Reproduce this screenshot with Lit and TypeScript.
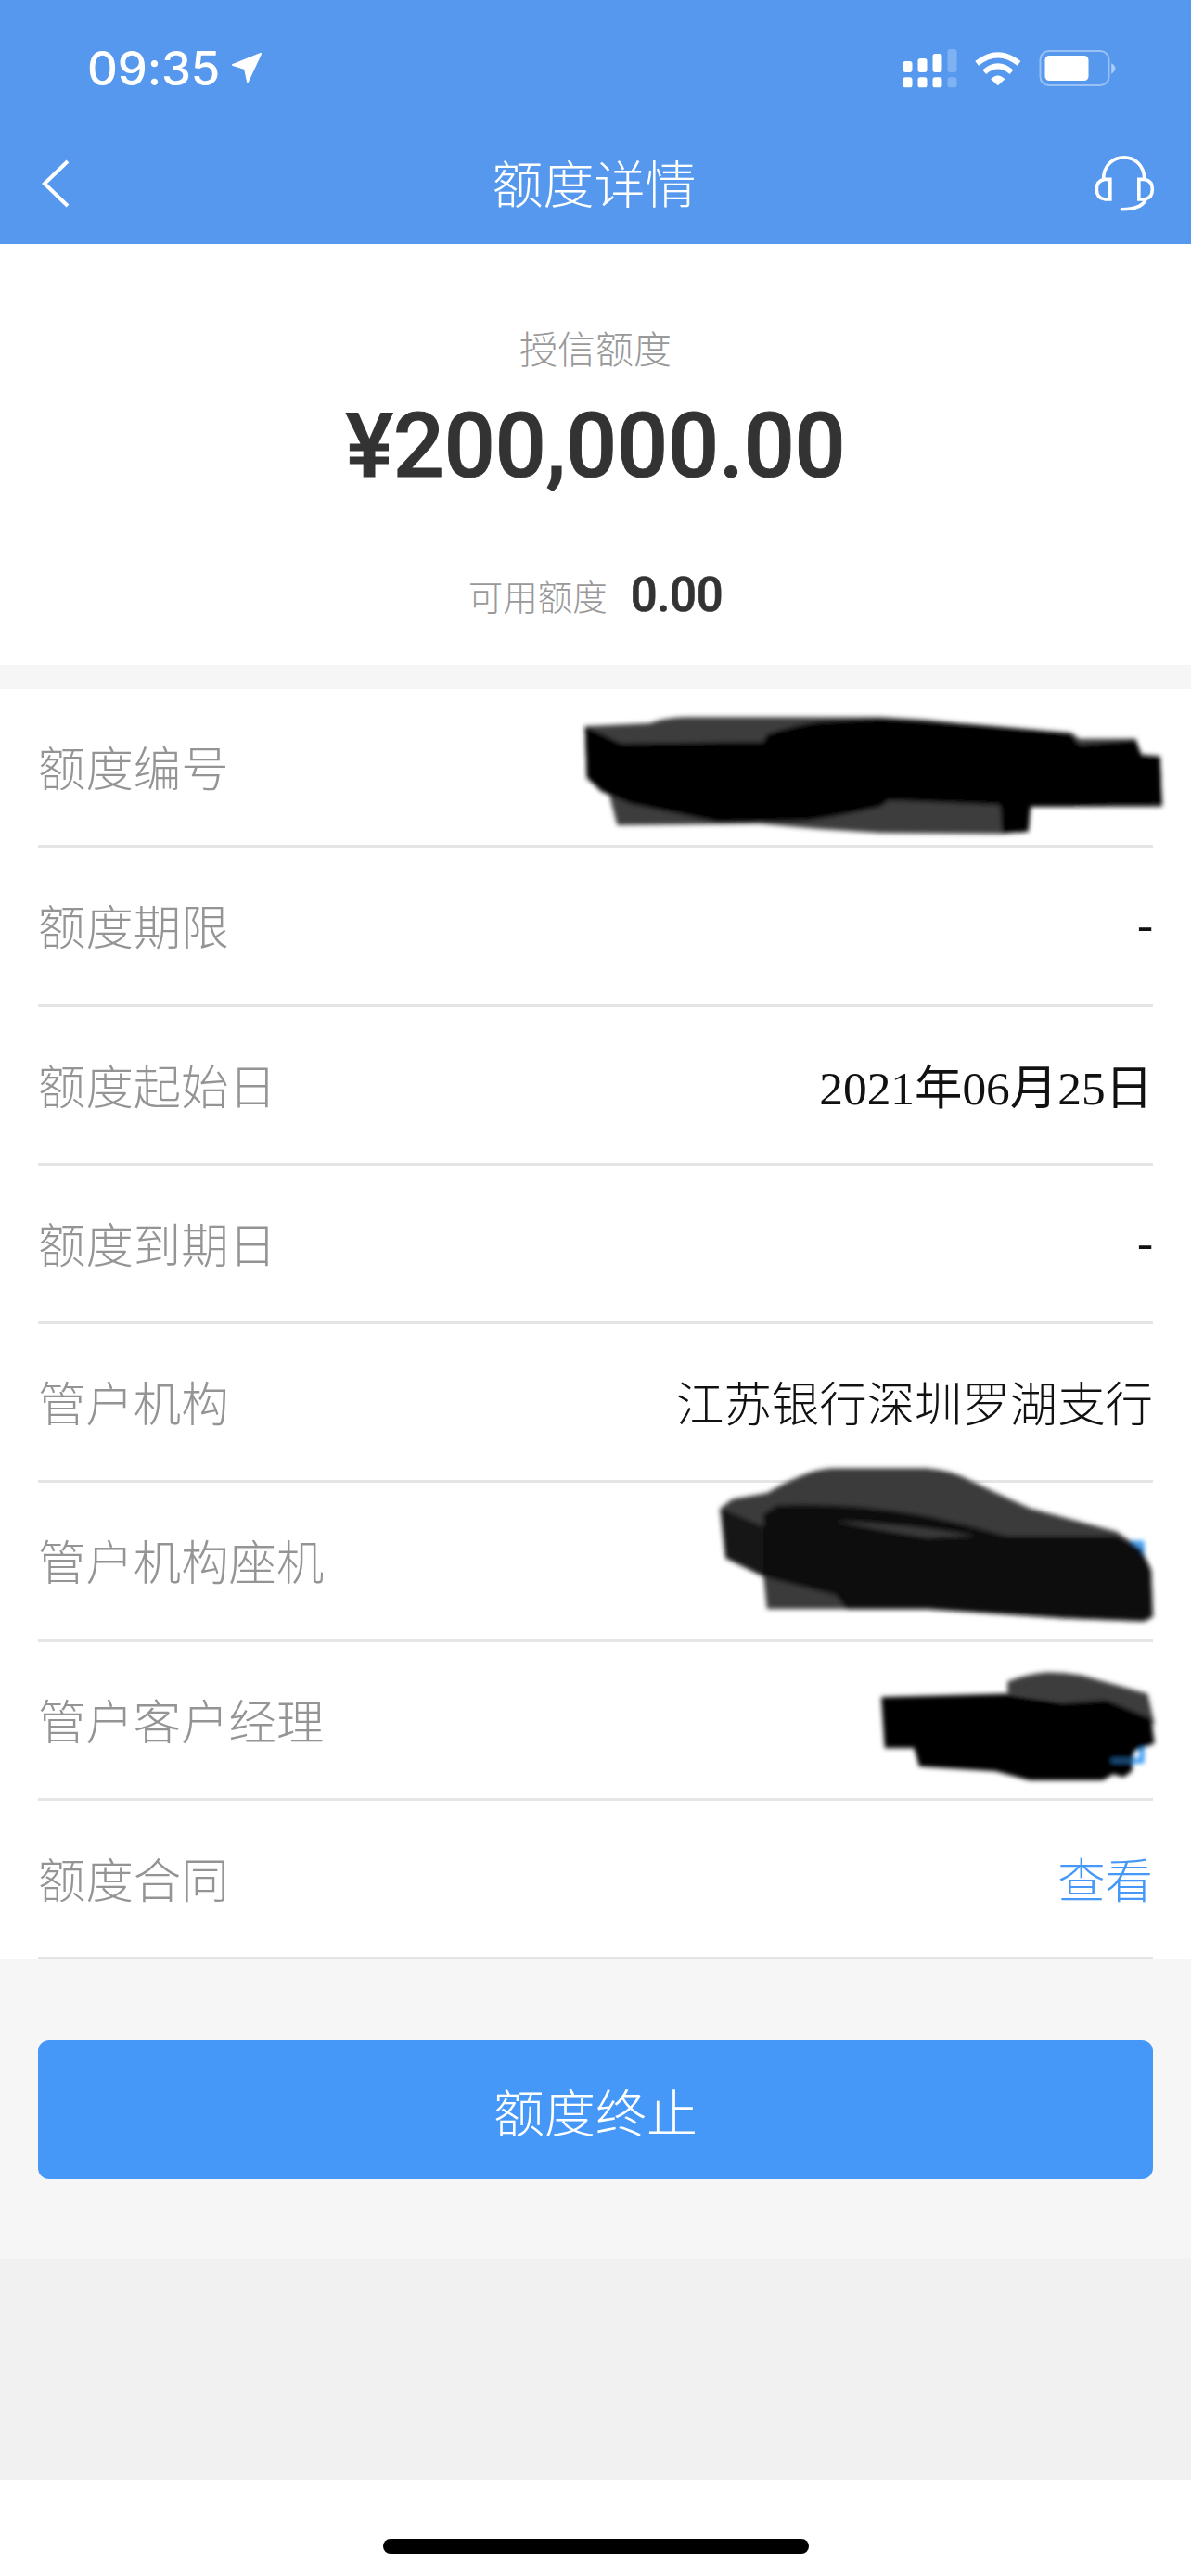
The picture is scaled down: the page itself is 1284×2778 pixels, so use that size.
import { LitElement, html, css, svg } from 'lit';
import { customElement } from 'lit/decorators.js';

interface Row {
  label: string;
  value?: string;
  kind?: 'date' | 'link';
}

const ROWS: Row[] = [
  { label: '额度编号' },
  { label: '额度期限', value: '-', kind: 'date' },
  { label: '额度起始日', value: '2021年06月25日', kind: 'date' },
  { label: '额度到期日', value: '-', kind: 'date' },
  { label: '管户机构', value: '江苏银行深圳罗湖支行' },
  { label: '管户机构座机' },
  { label: '管户客户经理' },
  { label: '额度合同', value: '查看', kind: 'link' },
];

@customElement('app-root')
export class AppRoot extends LitElement {
  static override styles = css`
    :host {
      display: block;
      position: relative;
      width: 1284px;
      height: 2778px;
      background: #fff;
      overflow: hidden;
      font-family: 'Noto Sans CJK SC', 'Noto Sans', sans-serif;
      font-weight: 400;
    }
    .header {
      background: #5598ee;
      color: #fff;
      height: 263px;
    }
    .status {
      height: 120px;
      padding: 13px 80px 0 94px;
      display: flex;
      align-items: center;
      justify-content: space-between;
    }
    .time {
      display: flex;
      align-items: center;
      gap: 12px;
      font: 500 51px Inter, 'Liberation Sans', sans-serif;
      letter-spacing: -0.2px;
    }
    .nav {
      height: 130px;
      padding: 0 45px;
      display: grid;
      grid-template-columns: 1fr auto 1fr;
      align-items: center;
    }
    .nav .title {
      font-size: 55px;
      line-height: 70px;
      padding: 0 3px 7px 0;
      font-weight: 300;
    }
    .nav .right {
      justify-self: end;
      display: flex;
      margin-right: -6px;
    }
    .summary {
      height: 454px;
      box-sizing: border-box;
      padding-top: 81px;
      display: flex;
      flex-direction: column;
      align-items: center;
    }
    .summary .caption {
      font-size: 41px;
      line-height: 60px;
      color: #999;
      font-weight: 300;
    }
    .summary .amount {
      margin-top: 17px;
      font: 500 97px/120px Roboto, sans-serif;
      color: #333;
      letter-spacing: -0.2px;
      -webkit-text-stroke: 1px #333;
    }
    .avail {
      margin-top: 71px;
      height: 60px;
      display: flex;
      align-items: center;
      gap: 25px;
    }
    .avail .caption {
      font-size: 37.5px;
    }
    .avail .num {
      font: 500 51px/60px Roboto, sans-serif;
      color: #333;
      letter-spacing: -0.4px;
      -webkit-text-stroke: 0.6px #333;
    }
    .band {
      height: 26px;
      background: #f6f6f6;
    }
    .rows {
      padding: 0 41px;
    }
    .row {
      height: 171.25px;
      box-sizing: border-box;
      padding-bottom: 3px;
      border-bottom: 3px solid #e5e5e5;
      display: flex;
      align-items: center;
      justify-content: space-between;
      font-size: 51.4px;
      font-weight: 300;
      color: #111;
    }
    .row .label {
      color: #949494;
    }
    .row .date {
      font-family: 'Liberation Serif', 'Noto Sans CJK SC', serif;
      font-weight: 400;
    }
    .row .link {
      color: #4598f7;
    }
    .action {
      height: 323px;
      box-sizing: border-box;
      padding: 87px 41px 0;
      background: #f6f6f6;
    }
    .action .btn {
      height: 150px;
      border-radius: 12px;
      background: #4598f8;
      color: #fff;
      font-size: 55px;
      font-weight: 300;
      display: flex;
      align-items: center;
      justify-content: center;
    }
    .spare {
      height: 239px;
      background: #f1f1f1;
    }
    .home {
      height: 103px;
      display: flex;
      justify-content: center;
      padding-top: 63px;
      box-sizing: border-box;
    }
    .home div {
      width: 459px;
      height: 16px;
      border-radius: 8px;
      background: #000;
    }
    .scribble {
      position: absolute;
      top: 0;
      left: 0;
      pointer-events: none;
    }
  `;

  private renderStatusIcons() {
    return html`<svg width="232" height="45" viewBox="215 90 695 135" fill="#fff">
      <rect x="219" y="135" width="30" height="36" rx="8" />
      <rect x="267" y="126" width="30" height="45" rx="8" />
      <rect x="315" y="111" width="30" height="60" rx="8" />
      <rect x="363" y="96" width="30" height="75" rx="8" opacity=".25" />
      <rect x="219" y="187" width="30" height="33" rx="8" />
      <rect x="267" y="187" width="30" height="33" rx="8" />
      <rect x="315" y="187" width="30" height="33" rx="8" />
      <rect x="363" y="187" width="30" height="33" rx="8" opacity=".25" />
      <path d="M458 142Q526 88 594 142M482 170Q526 132 570 170" fill="none" stroke="#fff" stroke-width="18" />
      <path d="M503 193Q526 170 549 193L526 214Z" />
      <rect x="663" y="102" width="222" height="111" rx="28" fill="none" stroke="#fff" stroke-width="6" opacity=".4" />
      <rect x="678" y="117" width="141" height="81" rx="14" />
      <path d="M893 142Q906 150 906 158Q906 166 893 176Z" opacity=".5" />
    </svg>`;
  }

  private renderScribbles() {
    // marker strokes that hide the account numbers, in zoomed crop coordinates
    return html`<svg class="scribble" width="1284" height="2778" viewBox="0 0 1284 2778">
      <defs>
        <filter id="soft" x="-5%" y="-10%" width="110%" height="120%">
          <feGaussianBlur stdDeviation="2.4" />
        </filter>
      </defs>
      <g filter="url(#soft)" stroke-linejoin="round">
        <g transform="translate(600 740) scale(.4367 .3333)">
          ${svg`<path fill="#3c3c3c" d="M70 130L230 120Q270 100 320 100L800 100Q900 105 1000 120L1270 150L1290 170L1430 170L1440 220L1490 225L1495 390L1170 390L1165 470L1100 478L800 475Q650 465 500 445L150 450L130 350L75 300Z" />
          <path fill="#050505" d="M70 130L160 185L510 180L520 155Q590 125 650 115L800 105Q1050 125 1270 155L1290 190L1430 175L1445 225L1490 230L1495 385L1170 390L1165 470L1100 475L1095 385L820 370L800 390Q700 420 620 435L400 440L180 380L110 340L75 295Z" />`}
        </g>
        <g transform="translate(700 1560) scale(.3731 .3333)">
          ${svg`<path fill="none" stroke="#2f96f0" stroke-width="14" d="M1380 312H1423V400" />
          <path fill="none" stroke="#2f96f0" stroke-width="14" d="M1320 1018H1423V950" />
          <path fill="#3a3a3a" d="M205 200L240 170L340 150Q400 110 460 85Q500 70 540 70L800 70Q860 75 900 95Q1000 150 1100 200L1350 275L1420 330L1450 400L1455 550L1430 565L1200 555L800 525L340 525L330 420L220 360Z" />
          <path fill="#141414" d="M205 200L330 260L330 420L220 360Z" />
          <path fill="#070707" d="M330 220L370 190Q480 185 600 195Q700 205 800 225Q900 250 950 265L1030 290L1350 290L1420 330L1450 400L1455 550L1430 565L1200 555L800 525L570 525L540 480L330 420ZM530 240Q760 250 950 290L800 295Q660 270 530 240Z" fill-rule="evenodd" />
          <path fill="#3c3c3c" d="M1035 800L1035 760Q1090 735 1150 730Q1200 730 1250 740L1440 800L1460 900L1200 830Z" />
          <path fill="#050505" d="M670 810L1030 800L1200 830L1320 820L1450 880L1460 960L1400 985L1395 1050L1370 1070L1340 1060L1310 1080L1100 1080L1000 1050L780 1035L765 975L680 975Z" />
          <path fill="none" stroke="#2f96f0" stroke-width="14" opacity=".55" d="M1335 1016H1420" />`}
        </g>
      </g>
    </svg>`;
  }

  protected override render() {
    return html`
      <div class="header">
        <div class="status">
          <div class="time">
            09:35
            <svg width="34" height="34" viewBox="0 0 34 34" fill="#fff" stroke="#fff" stroke-width="2" stroke-linejoin="round">
              <path d="M32 2L2 14L15 18L18 32Z" />
            </svg>
          </div>
          ${this.renderStatusIcons()}
        </div>
        <div class="nav">
          <svg width="32" height="52" viewBox="0 0 32 52" fill="none" stroke="#fff" stroke-width="4">
            <path d="M28 2L3 26L28 50" />
          </svg>
          <div class="title">额度详情</div>
          <div class="right">
            <svg width="66" height="62" viewBox="838 440 196 188" fill="none" stroke="#fff" stroke-width="11">
              <path d="M868 520C868 425 1002 425 1002 520" />
              <path d="M890 520H872Q846 525 846 552Q846 582 872 585H890Z" />
              <path d="M984 520H1002Q1028 525 1028 552Q1028 582 1002 585H984Z" />
              <path d="M1005 588Q992 618 928 618" stroke-linecap="round" />
            </svg>
          </div>
        </div>
      </div>

      <div class="summary">
        <div class="caption">授信额度</div>
        <div class="amount">¥200,000.00</div>
        <div class="avail">
          <span class="caption">可用额度</span>
          <span class="num">0.00</span>
        </div>
      </div>
      <div class="band"></div>

      <div class="rows">
        ${ROWS.map(
          (r) => html`<div class="row">
            <span class="label">${r.label}</span>
            <span class=${r.kind ?? ''}>${r.value ?? ''}</span>
          </div>`,
        )}
      </div>

      <div class="action"><div class="btn">额度终止</div></div>
      <div class="spare"></div>
      <div class="home"><div></div></div>

      ${this.renderScribbles()}
    `;
  }
}
